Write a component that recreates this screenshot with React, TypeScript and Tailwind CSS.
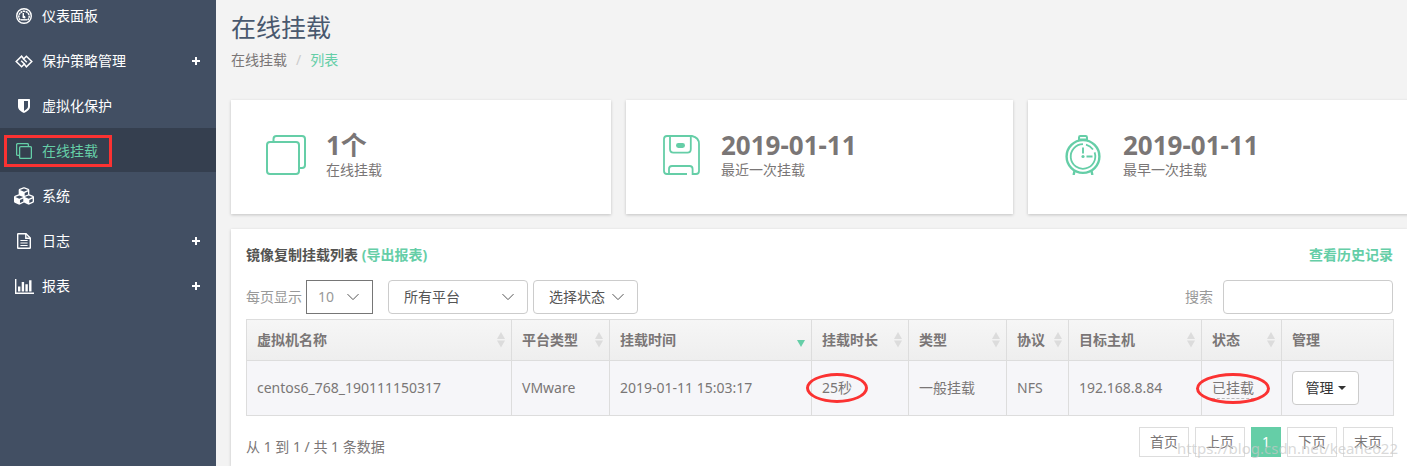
import React from 'react';
import clsx from 'clsx';
import { FaCubes } from 'react-icons/fa';

const DashboardIcon = () => (
  <svg width="16" height="16" viewBox="0 0 16 16" fill="none" stroke="currentColor">
    <circle cx="8" cy="8" r="7.3" strokeWidth="1.4" />
    <path d="M4.2 12A5.2 5.2 0 1 1 11.8 12" strokeWidth="1.5" strokeDasharray="2.2 0.5" />
    <path d="M4.6 11.8h6.8" strokeWidth="1.4" />
    <path d="M7.3 5v4.3l2 .6" strokeWidth="1.4" />
    <circle cx="8" cy="9" r="1.3" fill="currentColor" stroke="none" />
  </svg>
);

const PolicyIcon = () => (
  <svg width="18" height="13" viewBox="0 0 18 13" fill="none" stroke="currentColor" strokeWidth="1.5">
    <path d="M9 4.2L6.6 1.2 1.2 6.5 6.6 11.8 9.4 9 6.2 5.8" />
    <path d="M9 8.8L11.4 11.8 16.8 6.5 11.4 1.2 8.6 4 11.8 7.2" />
  </svg>
);

const ShieldIcon = () => (
  <svg width="12" height="14" viewBox="0 0 12 14" fill="currentColor">
    <path
      fillRule="evenodd"
      d="M0.7 0H11.3Q12 0 12 .7V7.6C12 10.8 8.5 13 6 14 3.5 13 0 10.8 0 7.6V.7Q0 0 .7 0ZM6 1.9V11.9C8.6 10.5 10 9.2 10 7.5V1.9Z"
    />
  </svg>
);

const CopyIcon = () => (
  <svg width="16" height="16" viewBox="0 0 16 16" fill="none" stroke="currentColor" strokeWidth="1.3">
    <rect x="3.6" y="3.6" width="11.8" height="11.8" rx="1.2" />
    <path d="M3.6 12.4H1.8Q.6 12.4 .6 11.2V1.8Q.6 .6 1.8 .6H11.2Q12.4 .6 12.4 1.8V3.6" />
  </svg>
);

const FileIcon = () => (
  <svg width="14" height="16" viewBox="0 0 14 16" fill="none" stroke="currentColor" strokeWidth="1.4">
    <path d="M1.3 .7H9L13.3 5V14.7Q13.3 15.3 12.7 15.3H1.3Q.7 15.3 .7 14.7V1.3Q.7 .7 1.3 .7Z" />
    <path d="M8.8 .8V5.2H13.2" />
    <path d="M3.4 7.5h7.2M3.4 10h7.2M3.4 12.5h7.2" strokeWidth="1.1" />
  </svg>
);

const ChartIcon = () => (
  <svg width="19" height="15" viewBox="0 0 19 15" fill="currentColor">
    <path d="M0 0h1.4v13.6H19V15H0z" />
    <path d="M3 7.5h2.4V12.4H3zM6.7 3h2.4v9.4H6.7zM10.4 5.2h2.4v7.2h-2.4zM14.1 1.2h2.4v11.2h-2.4z" />
  </svg>
);

const WindowsIcon = () => (
  <svg width="40" height="40" viewBox="0 0 40 40" fill="none" stroke="currentColor" strokeWidth="2">
    <rect x="1" y="7" width="32" height="32" rx="3" />
    <path d="M7.5 7V4Q7.5 1 10.5 1H36Q39 1 39 4V30Q39 33 36 33H33" />
  </svg>
);

const FloppyIcon = () => (
  <svg width="37" height="40" viewBox="0 0 37 40" fill="none" stroke="currentColor" strokeWidth="1.8">
    <path d="M24 39H4Q1 39 1 36V4Q1 1 4 1H29Q36 2.5 36 9V36Q36 39 33 39H29.6V34Q29.6 31 26.6 31H9Q6 31 6 34V39" />
    <path d="M7 1V14Q7 17.6 10.4 17.6H24.5Q27.8 17.6 27.8 14V1" />
    <rect x="13" y="8" width="9" height="5" rx="2.4" fill="currentColor" stroke="none" />
  </svg>
);

const ClockIcon = () => (
  <svg width="36" height="40" viewBox="0 0 36 40" fill="none" stroke="currentColor">
    <circle cx="18" cy="21.5" r="16.4" strokeWidth="2.4" />
    <path d="M18 9.2A12.3 12.3 0 1 0 29.6 17.4" strokeWidth="1.8" />
    <path d="M21 9.6A12.3 12.3 0 0 1 28 14.4" strokeWidth="1.8" />
    <path d="M14 5.2V2.4Q14 1 15.4 1H20.6Q22 1 22 2.4V5.2M14 4.4H22" strokeWidth="2" />
    <path d="M18 12.5V18.5M21.5 21.5H27.5" strokeWidth="1.9" />
    <circle cx="18" cy="21.5" r="1.6" fill="currentColor" stroke="none" />
    <path d="M9.5 36L8.6 40M26.5 36L27.4 40" strokeWidth="2.4" />
  </svg>
);

const Chevron = () => (
  <svg
    className="pointer-events-none absolute right-[14px] top-1/2 -translate-y-1/2"
    width="12"
    height="7"
    viewBox="0 0 12 7"
    fill="none"
    stroke="#555"
  >
    <path d="M.5 .6L6 6.1 11.5 .6" />
  </svg>
);

const navItems = [
  { label: '仪表面板', icon: <DashboardIcon /> },
  { label: '保护策略管理', icon: <PolicyIcon />, expandable: true },
  { label: '虚拟化保护', icon: <ShieldIcon /> },
  { label: '在线挂载', icon: <CopyIcon />, active: true },
  { label: '系统', icon: <FaCubes size={20} /> },
  { label: '日志', icon: <FileIcon />, expandable: true },
  { label: '报表', icon: <ChartIcon />, expandable: true },
];

const stats = [
  { value: '1个', label: '在线挂载', icon: <WindowsIcon /> },
  { value: '2019-01-11', label: '最近一次挂载', icon: <FloppyIcon /> },
  { value: '2019-01-11', label: '最早一次挂载', icon: <ClockIcon /> },
];

const columns = [
  { title: '虚拟机名称', width: 'w-[265px]', sort: 'both' },
  { title: '平台类型', width: 'w-[98px]', sort: 'both' },
  { title: '挂载时间', width: 'w-[202px]', sort: 'desc' },
  { title: '挂载时长', width: 'w-[97px]', sort: 'both' },
  { title: '类型', width: 'w-[98px]', sort: 'both' },
  { title: '协议', width: 'w-[62px]', sort: 'both' },
  { title: '目标主机', width: 'w-[133px]', sort: 'both' },
  { title: '状态', width: 'w-[80px]', sort: 'both' },
  { title: '管理', width: 'w-[112px]', sort: 'none' },
];

const pages = ['首页', '上页', '1', '下页', '末页'];

const SortIcon = ({ sort }: { sort: string }) => {
  if (sort === 'none') return null;
  return (
    <svg className="-mr-1 shrink-0" width="8" height="16" viewBox="0 0 8 16">
      {sort === 'both' ? (
        <path d="M4 0L8 7H0zM0 8.5H8L4 15.5z" fill="#dcdcdc" />
      ) : (
        <path d="M0 8H8L4 15z" fill="#65cea7" />
      )}
    </svg>
  );
};

const Circled = ({ children }: { children: React.ReactNode }) => (
  <span className="relative inline-block">
    {children}
    <span className="pointer-events-none absolute -inset-x-4 -inset-y-[5px] rounded-[50%] border-3 border-[#fb3232]" />
  </span>
);

const Sidebar = () => (
  <aside className="w-[216px] shrink-0 overflow-hidden bg-[#424f63] text-white">
    <ul className="-mt-[7px] flex flex-col gap-px">
      {navItems.map((item) => (
        <li key={item.label} className={clsx('relative', item.active && 'bg-[#353f4f] text-[#65cea7]')}>
          <a href="#" className="flex h-11 items-center pl-[14px] pr-4 pt-[2px]">
            <span className="flex w-7 items-center">
              <span className="flex w-5 shrink-0 items-center justify-center">{item.icon}</span>
            </span>
            {item.label}
            {item.expandable && (
              <svg className="ml-auto" width="8" height="8" viewBox="0 0 8 8" fill="currentColor">
                <path d="M3 0h2v3h3v2H5v3H3V5H0V3h3z" />
              </svg>
            )}
          </a>
          {item.active && (
            <span className="pointer-events-none absolute left-1 top-[7px] h-8 w-[108px] border-3 border-[#fb3232]" />
          )}
        </li>
      ))}
    </ul>
  </aside>
);

const App = () => {
  return (
    <div className="relative flex min-h-screen overflow-hidden bg-[#f3f3f3] font-['Noto_Sans','Noto_Sans_CJK_SC',sans-serif] text-sm leading-5 text-[#7a7676]">
      <Sidebar />

      <main className="flex min-w-0 flex-1 flex-col pl-[15px]">
        <header className="pt-[9px]">
          <h1 className="text-[25px] leading-9 text-[#49586e]">在线挂载</h1>
          <nav className="mt-[5px] flex gap-[9px]">
            <a href="#">在线挂载</a>
            <span className="text-[#ccc]">/</span>
            <span className="text-[#65cea7]">列表</span>
          </nav>
        </header>

        {/* the last card runs a little past the edge */}
        <section className="-mr-2 mt-[30px] grid grid-cols-[380fr_387fr_387fr] gap-[15px]">
          {stats.map((s) => (
            <div key={s.label} className="flex h-[114px] items-center gap-5 bg-white pb-1 pl-[35px] shadow-[0_1px_3px_rgba(0,0,0,0.2)]">
              <span className="flex w-10 shrink-0 justify-center text-[#65cea7]">{s.icon}</span>
              <div>
                <p className="text-[26px] font-bold leading-[30px]">{s.value}</p>
                <p>{s.label}</p>
              </div>
            </div>
          ))}
        </section>

        <section className="mt-[15px] flex-1 bg-white pl-[15px] pr-[14px] pt-4 shadow-[0_1px_3px_rgba(0,0,0,0.2)]">
          <div className="flex justify-between font-bold text-[#535351]">
            <h2>
              镜像复制挂载列表 <a href="#" className="text-[#65cea7]">(导出报表)</a>
            </h2>
            <a href="#" className="text-[#65cea7]">查看历史记录</a>
          </div>

          <div className="mt-[15px] flex items-center">
            <label htmlFor="page-size" className="mr-1 text-[#999]">每页显示</label>
            <span className="relative mr-[15px]">
              <select id="page-size" className="block h-[34px] w-[67px] appearance-none border border-[#767676] bg-white pl-[11px] text-[#999]">
                <option>10</option>
              </select>
              <Chevron />
            </span>
            <span className="relative mr-[5px]">
              <select aria-label="所有平台" className="block h-[34px] w-[140px] appearance-none rounded border border-[#ccc] bg-white pl-[15px] text-[#555]">
                <option>所有平台</option>
              </select>
              <Chevron />
            </span>
            <span className="relative">
              <select aria-label="选择状态" className="block h-[34px] w-[105px] appearance-none rounded border border-[#ccc] bg-white pl-[15px] text-[#555]">
                <option>选择状态</option>
              </select>
              <Chevron />
            </span>
            <label htmlFor="search" className="ml-auto mr-[10px] text-[#999]">搜索</label>
            <input id="search" type="text" className="h-[34px] w-[170px] rounded border border-[#ccc] bg-white px-3" />
          </div>

          <table className="mt-[5px] w-full table-fixed border-collapse text-left [&_td]:border [&_td]:border-[#ddd] [&_td]:px-[10px] [&_th]:border [&_th]:border-[#ddd] [&_th]:px-[10px]">
            <thead>
              <tr className="h-[41px] bg-linear-to-b from-[#f6f6f6] to-[#eee]">
                {columns.map((c) => (
                  <th key={c.title} className={c.width}>
                    <span className="flex items-center justify-between">
                      <span className="whitespace-nowrap">{c.title}</span>
                      <SortIcon sort={c.sort} />
                    </span>
                  </th>
                ))}
              </tr>
            </thead>
            <tbody>
              <tr className="h-[55px] whitespace-nowrap bg-[#f6f6f9]">
                <td>centos6_768_190111150317</td>
                <td>VMware</td>
                <td>2019-01-11 15:03:17</td>
                <td><Circled>25秒</Circled></td>
                <td>一般挂载</td>
                <td>NFS</td>
                <td>192.168.8.84</td>
                <td>
                  <Circled>
                    <span className="inline-block border-b border-dashed border-[#bbb]">已挂载</span>
                  </Circled>
                </td>
                <td>
                  <button className="flex h-[34px] w-[67px] items-center justify-center gap-1 rounded border border-[#ccc] bg-white text-[#333]">
                    管理
                    <span className="border-x-4 border-t-4 border-x-transparent border-t-[#333]" />
                  </button>
                </td>
              </tr>
            </tbody>
          </table>

          <div className="mt-[11px] flex justify-between">
            <p className="pt-[10px]">从 1 到 1 / 共 1 条数据</p>
            <div className="flex gap-[6px]">
              {pages.map((p) => (
                <button
                  key={p}
                  className={clsx(
                    'h-[30px] border',
                    p === '1' ? 'w-[30px] border-[#65cea7] bg-[#65cea7] text-white' : 'w-[50px] border-[#ddd] bg-white'
                  )}
                >
                  {p}
                </button>
              ))}
            </div>
          </div>
        </section>
      </main>

      <span className="pointer-events-none absolute bottom-2 right-[9px] text-[15px] text-[#c8c8c8]/70">
        https://blog.csdn.net/keane622
      </span>
    </div>
  );
};

export default App;
